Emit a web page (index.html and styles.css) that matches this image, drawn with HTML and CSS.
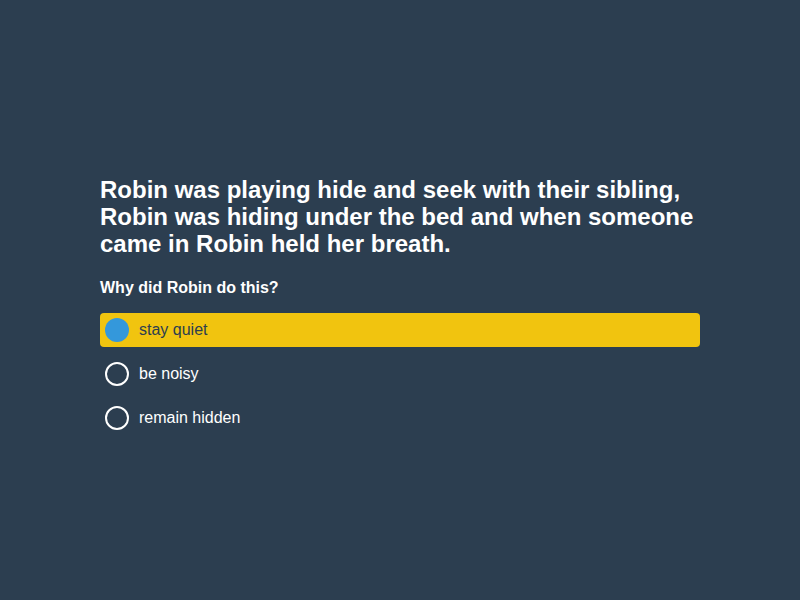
FILE: index.html
```html
<!DOCTYPE html>
<html>
<head>
<meta charset="utf-8">
<link rel="stylesheet" href="styles.css">
</head>
<body>
<main class="quiz">
  <h1 class="story">Robin was playing hide and seek with their sibling, Robin was hiding under the bed and when someone came in Robin held her breath.</h1>
  <h2 class="question">Why did Robin do this?</h2>
  <ul class="options">
    <li class="option selected"><span class="radio"></span><span class="label">stay quiet</span></li>
    <li class="option"><span class="radio"></span><span class="label">be noisy</span></li>
    <li class="option"><span class="radio"></span><span class="label">remain hidden</span></li>
  </ul>
</main>
</body>
</html>
```
FILE: styles.css
```css
html, body {
  margin: 0;
  padding: 0;
  background: #2c3e50;
  height: 600px;
  font-family: "Liberation Sans", Arial, sans-serif;
  color: #ffffff;
}
.quiz {
  width: 600px;
  margin: 0 auto;
  padding-top: 176px;
}
.story {
  margin: 0;
  font-size: 24px;
  line-height: 27px;
  font-weight: bold;
}
.question {
  margin: 21px 0 0;
  font-size: 16px;
  line-height: 19px;
  font-weight: bold;
}
.options {
  list-style: none;
  margin: 16px 0 0;
  padding: 0;
}
.option {
  display: flex;
  align-items: center;
  height: 34px;
  padding-left: 5px;
  margin-bottom: 10px;
  border-radius: 4px;
  font-size: 16px;
}
.option.selected {
  background: #f1c40f;
  color: #2c3e50;
}
.radio {
  box-sizing: border-box;
  width: 24px;
  height: 24px;
  border-radius: 50%;
  border: 2px solid #ffffff;
  margin-right: 10px;
  flex: none;
}
.selected .radio {
  border: none;
  background: #3498db;
}
```
